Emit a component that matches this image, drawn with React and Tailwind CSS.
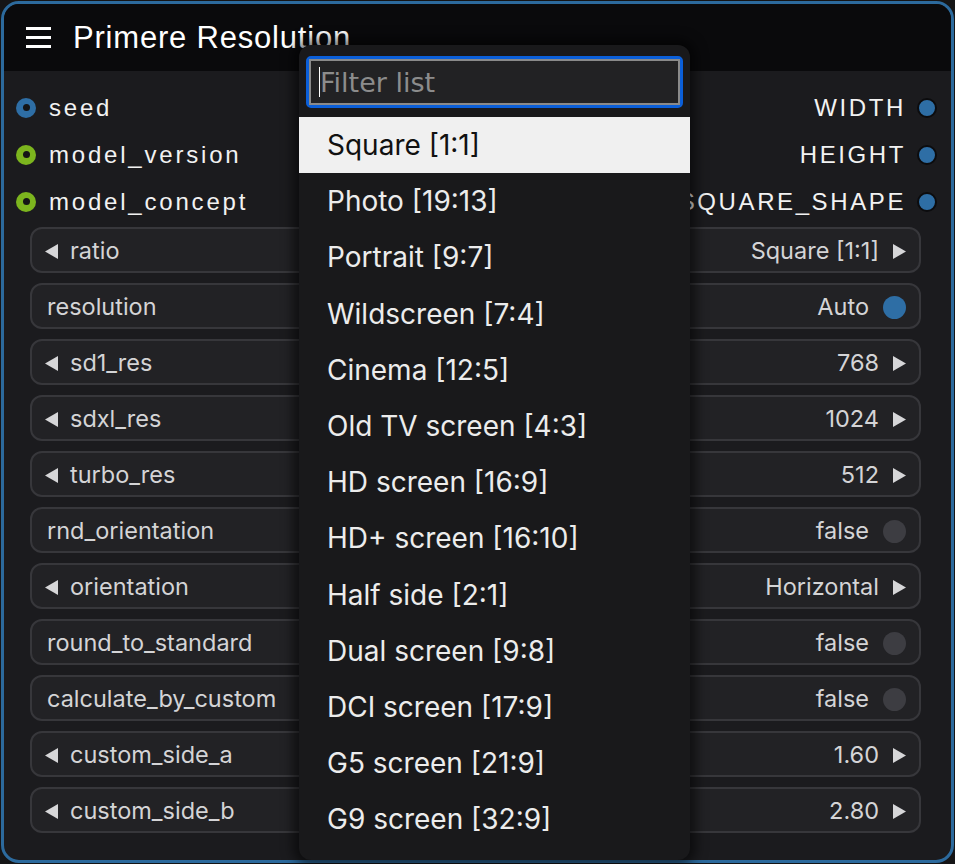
import React from "react";

const slotFont = { fontFamily: '"Liberation Sans", Arial, sans-serif' };

function LeftTri() {
  return (
    <svg width="13" height="15" viewBox="0 0 13 15" className="shrink-0">
      <polygon points="13,0 13,15 0,7.5" fill="#d6d6d8" />
    </svg>
  );
}
function RightTri() {
  return (
    <svg width="13" height="15" viewBox="0 0 13 15" className="shrink-0">
      <polygon points="0,0 0,15 13,7.5" fill="#d6d6d8" />
    </svg>
  );
}

const widgets = [
  { label: "ratio", value: "Square [1:1]", type: "combo" },
  { label: "resolution", value: "Auto", type: "toggle", on: true },
  { label: "sd1_res", value: "768", type: "combo" },
  { label: "sdxl_res", value: "1024", type: "combo" },
  { label: "turbo_res", value: "512", type: "combo" },
  { label: "rnd_orientation", value: "false", type: "toggle" },
  { label: "orientation", value: "Horizontal", type: "combo" },
  { label: "round_to_standard", value: "false", type: "toggle" },
  { label: "calculate_by_custom", value: "false", type: "toggle" },
  { label: "custom_side_a", value: "1.60", type: "combo" },
  { label: "custom_side_b", value: "2.80", type: "combo" },
];

const items = [
  "Square [1:1]",
  "Photo [19:13]",
  "Portrait [9:7]",
  "Wildscreen [7:4]",
  "Cinema [12:5]",
  "Old TV screen [4:3]",
  "HD screen [16:9]",
  "HD+ screen [16:10]",
  "Half side [2:1]",
  "Dual screen [9:8]",
  "DCI screen [17:9]",
  "G5 screen [21:9]",
  "G9 screen [32:9]",
];

function InputSlot({ color, label }) {
  return (
    <div className="h-[47px] flex items-center pl-[12px]">
      <div
        className="w-[20px] h-[20px] rounded-full flex items-center justify-center"
        style={{ backgroundColor: color }}
      >
        <div className="w-[7px] h-[7px] rounded-full bg-[#141416]" />
      </div>
      <span
        className="ml-[13px] text-[24px] tracking-[2.8px] text-[#f2f2f2] leading-none"
        style={slotFont}
      >
        {label}
      </span>
    </div>
  );
}

function OutputSlot({ label }) {
  return (
    <div className="h-[47px] flex items-center justify-end pr-[14px]">
      <span
        className="mr-[11px] text-[24px] tracking-[2.6px] text-[#f2f2f2] leading-none"
        style={slotFont}
      >
        {label}
      </span>
      <div className="w-[20px] h-[20px] rounded-full bg-[#2e6ea5] border-2 border-[#0c0c0e]" />
    </div>
  );
}

export default function App() {
  return (
    <div className="w-[955px] h-[864px] bg-[#151516] p-px relative overflow-hidden">
      <div className="h-full rounded-[18px] border-[3px] border-[#2c6a9d] bg-[#1b1b1e] overflow-hidden flex flex-col">
        {/* title bar */}
        <div className="h-[67px] bg-[#0a0a0c] flex items-center pl-[22px] shrink-0">
          <div className="flex flex-col gap-[6px]">
            <div className="w-[25px] h-[3px] bg-white" />
            <div className="w-[25px] h-[3px] bg-white" />
            <div className="w-[25px] h-[3px] bg-white" />
          </div>
          <span
            className="ml-[22px] text-[31px] tracking-[0.8px] text-white leading-none"
            style={slotFont}
          >
            Primere Resolution
          </span>
        </div>

        {/* slots */}
        <div className="pt-[13px] flex justify-between">
          <div className="flex flex-col">
            <InputSlot color="#2e6ea5" label="seed" />
            <InputSlot color="#7cb51e" label="model_version" />
            <InputSlot color="#7cb51e" label="model_concept" />
          </div>
          <div className="flex flex-col">
            <OutputSlot label="WIDTH" />
            <OutputSlot label="HEIGHT" />
            <OutputSlot label="SQUARE_SHAPE" />
          </div>
        </div>

        {/* widgets */}
        <div
          className="mt-[2px] ml-[26px] mr-[30px] flex flex-col gap-[10px]"
          style={{ fontFamily: "Inter, sans-serif" }}
        >
          {widgets.map((w) => (
            <div
              key={w.label}
              className="h-[46px] rounded-[12px] bg-[#222225] border-2 border-[#37373b] flex items-center pt-[2px] text-[23.5px] text-[#d4d4d6]"
            >
              {w.type === "combo" ? (
                <div className="flex items-center pl-[13px]">
                  <LeftTri />
                  <span className="ml-[12px]">{w.label}</span>
                </div>
              ) : (
                <span className="pl-[15px]">{w.label}</span>
              )}
              <div className="ml-auto flex items-center pr-[13px]">
                {w.type === "combo" ? (
                  <>
                    <span>{w.value}</span>
                    <span className="ml-[14px]">
                      <RightTri />
                    </span>
                  </>
                ) : (
                  <>
                    <span>{w.value}</span>
                    <div
                      className={
                        "ml-[14px] w-[23px] h-[23px] rounded-full " +
                        (w.on ? "bg-[#2e6ea5]" : "bg-[#3d3d42]")
                      }
                    />
                  </>
                )}
              </div>
            </div>
          ))}
        </div>
      </div>

      {/* dropdown menu */}
      <div className="absolute left-[299px] top-[45px] w-[391px] h-[815px] rounded-[12px] bg-[#19191b] shadow-[0_0_12px_6px_rgba(0,0,0,0.55)] overflow-hidden">
        <div className="pt-[11px] px-[7px]">
          <div className="h-[52px] rounded-[5px] border-[3px] border-[#0b5fd9]">
            <div className="h-full border-2 border-[#8a8a8a] bg-[#222224] flex items-center pl-[8px]">
              <div className="w-px h-[30px] bg-white" />
              <span
                className="text-[27px] text-[#8c8c8c] leading-none"
                style={{ fontFamily: '"DejaVu Sans", Verdana, sans-serif' }}
              >
                Filter list
              </span>
            </div>
          </div>
        </div>
        <div
          className="mt-[9px] flex flex-col"
          style={{ fontFamily: "Inter, sans-serif" }}
        >
          {items.map((it, i) => (
            <div
              key={it}
              className={
                "h-[56.2px] flex items-center pl-[28px] text-[28px] " +
                (i === 0 ? "bg-[#f0f0f0] text-[#111]" : "text-[#ececec]")
              }
            >
              {it}
            </div>
          ))}
        </div>
      </div>
    </div>
  );
}
